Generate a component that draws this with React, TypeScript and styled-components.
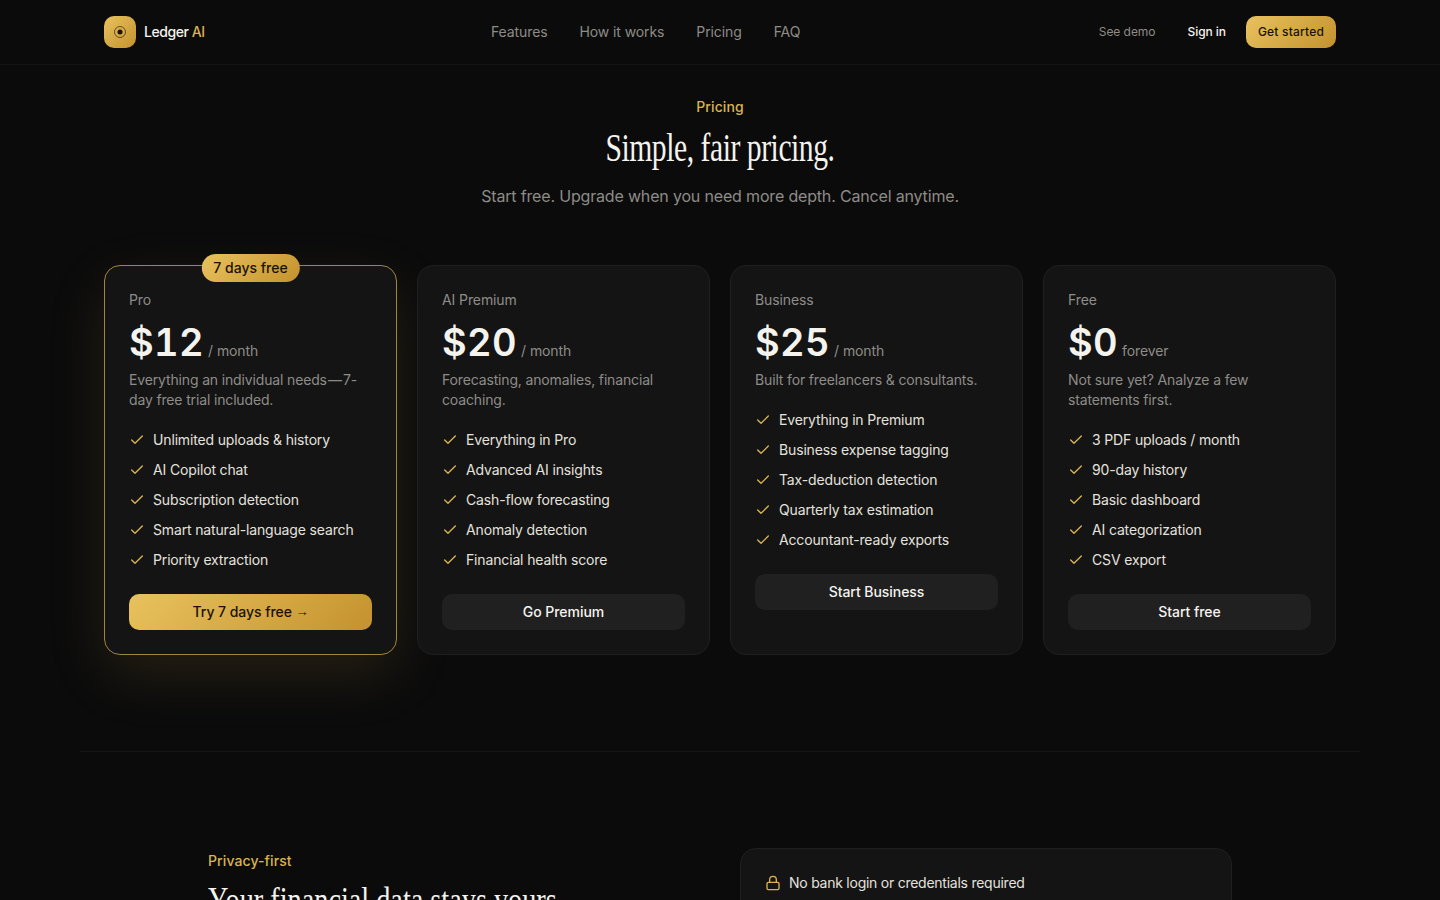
import React from 'react';
import styled, { createGlobalStyle } from 'styled-components';
import { Check, Lock } from 'lucide-react';

const GlobalStyle = createGlobalStyle`
  html, body {
    margin: 0;
    height: 900px;
    overflow: hidden;
    background: #0b0b0c;
  }
  body {
    color: #f5f3ee;
    font-family: Inter, "Liberation Sans", sans-serif;
  }
  * { box-sizing: border-box; }
`;

const gold = 'linear-gradient(135deg, #e8c25e, #c4922e)';

const Header = styled.header`
  height: 65px;
  border-bottom: 1px solid #141415;
`;

const HeaderInner = styled.div`
  width: 1232px;
  height: 64px;
  margin: 0 auto;
  display: flex;
  justify-content: space-between;
  align-items: center;
`;

const Brand = styled.div`
  display: flex;
  align-items: center;
  gap: 8px;
`;

const LogoMark = styled.div`
  width: 32px;
  height: 32px;
  border-radius: 10px;
  background: ${gold};
  display: flex;
  align-items: center;
  justify-content: center;
`;

const BrandName = styled.span`
  font-size: 14px;
  line-height: 20px;
  padding-bottom: 1px;
  font-weight: 500;
  letter-spacing: -0.45px;
  color: #f5f3ee;
  em {
    font-style: normal;
    color: #d9b44f;
  }
`;

const Nav = styled.nav`
  display: flex;
  gap: 32px;
`;

const NavLink = styled.a`
  font-size: 14px;
  line-height: 20px;
  padding-bottom: 1px;
  color: #8e8c87;
  letter-spacing: -0.1px;
`;

const HeaderActions = styled.div`
  display: flex;
  align-items: center;
`;

const GhostLink = styled.a<{ $muted?: boolean }>`
  font-size: 12px;
  line-height: 16px;
  padding: 0 12px 1px;
  margin-right: 8px;
  font-weight: ${(p) => (p.$muted ? 400 : 500)};
  letter-spacing: -0.05px;
  color: ${(p) => (p.$muted ? '#8e8c87' : '#f5f3ee')};
`;

const SmallCta = styled.button`
  height: 32px;
  width: 90px;
  padding: 0 0 1px;
  border: 0;
  border-radius: 10px;
  background: ${gold};
  color: #1a1206;
  font: 500 12px Inter, sans-serif;
  letter-spacing: 0.2px;
`;

const PricingSection = styled.section`
  width: 1232px;
  margin: 0 auto;
  padding-top: 32px;
`;

const Eyebrow = styled.div`
  font-size: 14px;
  line-height: 20px;
  font-weight: 500;
  letter-spacing: 0.1px;
  color: #d9b44f;
`;

const Intro = styled.div`
  text-align: center;
`;

const Title = styled.h2`
  margin: 9px 0 0;
  font-family: "Liberation Serif", serif;
  font-weight: 400;
  font-size: 40px;
  line-height: 44px;
  letter-spacing: -0.6px;
  transform: scaleX(0.74);
  color: #f5f3ee;
`;

const Lead = styled.p`
  margin: 14px 0 0;
  font-size: 16px;
  line-height: 24px;
  letter-spacing: -0.17px;
  color: #8e8c87;
`;

const CardGrid = styled.div`
  margin-top: 57px;
  display: grid;
  grid-template-columns: repeat(4, 293px);
  gap: 20px;
  align-items: stretch;
`;

const Card = styled.article<{ $featured?: boolean }>`
  position: relative;
  height: 390px;
  padding: 24px;
  border-radius: 16px;
  background: #141415;
  border: 1px solid ${(p) => (p.$featured ? '#a0853c' : '#1f1f20')};
  box-shadow: ${(p) => (p.$featured ? '0 20px 60px rgba(217, 170, 70, 0.13)' : 'none')};
  display: flex;
  flex-direction: column;
`;

const Badge = styled.span`
  position: absolute;
  top: -12px;
  left: 50%;
  transform: translateX(-50%);
  height: 28px;
  padding: 0 12px;
  border-radius: 14px;
  background: ${gold};
  color: #1a1206;
  font-size: 14px;
  font-weight: 500;
  line-height: 28px;
  white-space: nowrap;
`;

const PlanName = styled.div`
  font-size: 14px;
  line-height: 20px;
  letter-spacing: -0.1px;
  color: #8e8c87;
`;

const PriceRow = styled.div`
  margin-top: 10px;
  display: flex;
  align-items: baseline;
  gap: 4px;
  height: 44px;
`;

const Price = styled.span`
  font-size: 38px;
  line-height: 44px;
  font-weight: 600;
  font-variant-numeric: tabular-nums;
  letter-spacing: 0.4px;
  color: #f5f3ee;
`;

const Period = styled.span`
  font-size: 14px;
  letter-spacing: -0.1px;
  color: #8e8c87;
`;

const Blurb = styled.p`
  margin: 6px 0 0;
  font-size: 14px;
  line-height: 20px;
  letter-spacing: -0.15px;
  color: #8e8c87;
`;

const Features = styled.ul`
  list-style: none;
  margin: 20px 0 0;
  padding: 0;
  display: flex;
  flex-direction: column;
  gap: 10px;
`;

const Feature = styled.li`
  display: flex;
  align-items: center;
  gap: 8px;
  font-size: 14px;
  line-height: 20px;
  letter-spacing: -0.15px;
  color: #e4e2dd;
`;

const Cta = styled.button<{ $primary?: boolean }>`
  margin-top: 24px;
  width: 100%;
  height: 36px;
  flex: none;
  padding: 0 0 2px;
  border: 0;
  border-radius: 10px;
  background: ${(p) => (p.$primary ? gold : '#202021')};
  color: ${(p) => (p.$primary ? '#1a1206' : '#f5f3ee')};
  font: 500 14px Inter, sans-serif;
  letter-spacing: -0.05px;
`;

const Arrow = styled.span`
  font-family: "Liberation Sans", sans-serif;
  font-size: 13px;
  vertical-align: 1px;
`;

const Rule = styled.hr`
  width: 1280px;
  margin: 96px auto 0;
  border: 0;
  border-top: 1px solid #161617;
`;

const PrivacySection = styled.section`
  width: 1024px;
  margin: 96px auto 0;
  display: grid;
  grid-template-columns: 1fr 492px;
  gap: 40px;
`;

const PrivacyIntro = styled.div`
  padding-top: 3px;
`;

const PrivacyTitle = styled.h2`
  margin: 9px 0 0;
  font-family: "Liberation Serif", serif;
  font-weight: 400;
  font-size: 36px;
  line-height: 40px;
  color: #f5f3ee;
  white-space: nowrap;
  transform: scaleX(0.785);
  transform-origin: left center;
`;

const PrivacyCard = styled.div`
  height: 200px;
  padding: 24px;
  border-radius: 16px;
  background: #141415;
  border: 1px solid #1f1f20;
`;

const PrivacyItem = styled.div`
  display: flex;
  align-items: center;
  gap: 8px;
  font-size: 14px;
  line-height: 20px;
  letter-spacing: -0.25px;
  color: #e4e2dd;
`;

const plans = [
  {
    name: 'Pro',
    price: '$12',
    period: '/ month',
    blurb: 'Everything an individual needs\u200A—\u200A7-day free trial included.',
    features: ['Unlimited uploads & history', 'AI Copilot chat', 'Subscription detection', 'Smart natural-language search', 'Priority extraction'],
    cta: 'Try 7 days free ',
    featured: true,
  },
  {
    name: 'AI Premium',
    price: '$20',
    period: '/ month',
    blurb: 'Forecasting, anomalies, financial coaching.',
    features: ['Everything in Pro', 'Advanced AI insights', 'Cash-flow forecasting', 'Anomaly detection', 'Financial health score'],
    cta: 'Go Premium',
  },
  {
    name: 'Business',
    price: '$25',
    period: '/ month',
    blurb: 'Built for freelancers & consultants.',
    features: ['Everything in Premium', 'Business expense tagging', 'Tax-deduction detection', 'Quarterly tax estimation', 'Accountant-ready exports'],
    cta: 'Start Business',
  },
  {
    name: 'Free',
    price: '$0',
    period: 'forever',
    blurb: 'Not sure yet? Analyze a few statements first.',
    features: ['3 PDF uploads / month', '90-day history', 'Basic dashboard', 'AI categorization', 'CSV export'],
    cta: 'Start free',
  },
];

const App = () => {
  return (
    <>
      <GlobalStyle />
      <Header>
        <HeaderInner>
          <Brand>
            <LogoMark>
              <svg width="16" height="16" viewBox="0 0 16 16" fill="none">
                <circle cx="8" cy="8" r="5.5" stroke="#1a1206" strokeOpacity="0.6" />
                <circle cx="8" cy="8" r="2.5" fill="#1a1206" />
              </svg>
            </LogoMark>
            <BrandName>Ledger <em>AI</em></BrandName>
          </Brand>
          <Nav>
            <NavLink>Features</NavLink>
            <NavLink>How it works</NavLink>
            <NavLink>Pricing</NavLink>
            <NavLink>FAQ</NavLink>
          </Nav>
          <HeaderActions>
            <GhostLink $muted>See demo</GhostLink>
            <GhostLink>Sign in</GhostLink>
            <SmallCta>Get started</SmallCta>
          </HeaderActions>
        </HeaderInner>
      </Header>

      <PricingSection>
        <Intro>
          <Eyebrow>Pricing</Eyebrow>
          <Title>Simple, fair pricing.</Title>
          <Lead>Start free. Upgrade when you need more depth. Cancel anytime.</Lead>
        </Intro>
        <CardGrid>
          {plans.map((plan) => (
            <Card key={plan.name} $featured={plan.featured}>
              {plan.featured && <Badge>7 days free</Badge>}
              <PlanName>{plan.name}</PlanName>
              <PriceRow>
                <Price>{plan.price}</Price>
                <Period>{plan.period}</Period>
              </PriceRow>
              <Blurb>{plan.blurb}</Blurb>
              <Features>
                {plan.features.map((f) => (
                  <Feature key={f}>
                    <Check size={16} color="#d9b44f" strokeWidth={2} />
                    {f}
                  </Feature>
                ))}
              </Features>
              <Cta $primary={plan.featured}>
                {plan.cta}
                {plan.featured && <Arrow>→</Arrow>}
              </Cta>
            </Card>
          ))}
        </CardGrid>
      </PricingSection>

      <Rule />

      <PrivacySection>
        <PrivacyIntro>
          <Eyebrow>Privacy-first</Eyebrow>
          <PrivacyTitle>Your financial data stays yours.</PrivacyTitle>
        </PrivacyIntro>
        <PrivacyCard>
          <PrivacyItem>
            <Lock size={16} color="#d9b44f" />
            No bank login or credentials required
          </PrivacyItem>
        </PrivacyCard>
      </PrivacySection>
    </>
  );
};

export default App;
